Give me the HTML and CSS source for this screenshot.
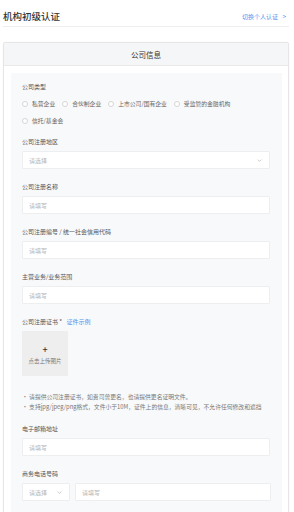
FILE: index.html
```html
<!DOCTYPE html>
<html lang="zh-CN">
<head>
    <meta charset="UTF-8">
    <meta name="viewport" content="width=device-width, initial-scale=1.0">
    <title>机构初级认证</title>
    <link rel="stylesheet" href="styles.css">
</head>
<body>
    <div class="page">
        <div class="topbar">
            <h1 class="title">机构初级认证</h1>
            <a class="switch-link" href="#">切换个人认证 <span class="arrow">&gt;</span></a>
        </div>

        <div class="card">
            <div class="card-head">公司信息</div>
            <div class="card-body">
                <div class="panel">
                    <div class="field field-radio">
                        <div class="label">公司类型</div>
                        <div class="radio-group">
                            <label class="radio"><span class="dot"></span>私营企业</label>
                            <label class="radio"><span class="dot"></span>合伙制企业</label>
                            <label class="radio"><span class="dot"></span>上市公司/国有企业</label>
                            <label class="radio"><span class="dot"></span>受监管的金融机构</label>
                            <label class="radio"><span class="dot"></span>信托/基金会</label>
                        </div>
                    </div>

                    <div class="field">
                        <div class="label">公司注册地区</div>
                        <div class="input select">
                            <span>请选择</span>
                            <svg class="chevron" viewBox="0 0 8 5" width="5" height="3"><path d="M1 1l3 3 3-3" fill="none" stroke="#aaa" stroke-width="1"/></svg>
                        </div>
                    </div>

                    <div class="field">
                        <div class="label">公司注册名称</div>
                        <div class="input">请填写</div>
                    </div>

                    <div class="field">
                        <div class="label">公司注册编号 / 统一社会信用代码</div>
                        <div class="input">请填写</div>
                    </div>

                    <div class="field">
                        <div class="label">主营业务/业务范围</div>
                        <div class="input">请填写</div>
                    </div>

                    <div class="field field-upload">
                        <div class="label">公司注册证书 * <a class="sample-link" href="#">证件示例</a></div>
                        <div class="upload">
                            <span class="plus">+</span>
                            <span class="upload-text">点击上传图片</span>
                        </div>
                    </div>

                    <ul class="notes">
                        <li>· 请提供公司注册证书，如贵司曾更名，也请提供更名证明文件。</li>
                        <li>· 支持jpg/jpeg/png格式，文件小于10M，证件上的信息，清晰可见，不允许任何修改和遮挡</li>
                    </ul>

                    <div class="field">
                        <div class="label">电子邮箱地址</div>
                        <div class="input">请填写</div>
                    </div>

                    <div class="field">
                        <div class="label">商务电话号码</div>
                        <div class="phone-row">
                            <div class="input select select-code">
                                <span>请选择</span>
                                <svg class="chevron" viewBox="0 0 8 5" width="5" height="3"><path d="M1 1l3 3 3-3" fill="none" stroke="#aaa" stroke-width="1"/></svg>
                            </div>
                            <div class="input phone-input">请填写</div>
                        </div>
                    </div>
                </div>
            </div>
        </div>
    </div>
</body>
</html>
```

FILE: styles.css
```css
* {
    margin: 0;
    padding: 0;
    box-sizing: border-box;
}

body {
    font-family: "Noto Sans CJK SC", "Noto Sans", sans-serif;
    background: #fff;
    color: #333;
}

.page {
    padding: 6px 5px 0 3px;
}

/* top title bar */
.topbar {
    height: 21px;
    display: flex;
    justify-content: space-between;
    align-items: center;
    border-bottom: 1px solid #eeeeee;
    padding-bottom: 1px;
}

.title {
    font-size: 9.5px;
    font-weight: 500;
    color: #333;
    line-height: 20px;
}

.switch-link {
    font-size: 6px;
    color: #4d94ef;
    text-decoration: none;
    margin-right: 3px;
}

.switch-link .arrow {
    margin-left: 3px;
    font-size: 6.5px;
}

/* card */
.card {
    margin-top: 15px;
    border: 1px solid #e6e6e6;
    border-radius: 2px;
    box-shadow: 0 0 2px rgba(0, 0, 0, 0.05);
}

.card-head {
    height: 23px;
    background: #f5f6f7;
    border-bottom: 1px solid #e9e9e9;
    display: flex;
    align-items: center;
    justify-content: center;
    font-size: 7.5px;
    color: #333;
}

.card-body {
    padding: 7px 6px 0 7px;
}

.panel {
    background: #f8f9fb;
    padding: 10px 12px 10px 11px;
}

/* fields */
.field {
    margin-bottom: 14px;
}

.label {
    font-size: 6px;
    line-height: 8px;
    color: #555;
    margin-bottom: 5px;
}

.sample-link {
    color: #4d94ef;
    text-decoration: none;
    margin-left: 3px;
}

.input {
    height: 18px;
    background: #fff;
    border: 1px solid #edeef0;
    border-radius: 1px;
    padding: 0 6px;
    font-size: 6px;
    color: #b5b5b5;
    display: flex;
    align-items: center;
}

.select {
    justify-content: space-between;
}

.chevron {
    margin-right: 1px;
}

/* radios */
.field-radio {
    margin-bottom: 9px;
}

.field-radio .label {
    margin-bottom: 4px;
}

.radio-group {
    display: flex;
    flex-wrap: wrap;
    column-gap: 7px;
}

.radio {
    display: flex;
    align-items: center;
    height: 17px;
    font-size: 5.8px;
    color: #666;
}

.dot {
    width: 6px;
    height: 6px;
    border: 1px solid #d6d6d6;
    border-radius: 50%;
    background: #fff;
    margin-right: 4px;
}

/* upload */
.field-upload {
    margin-bottom: 16px;
}

.upload {
    width: 46px;
    height: 45px;
    background: #eeeeee;
    display: flex;
    flex-direction: column;
    align-items: center;
    justify-content: center;
}

.plus {
    font-size: 9px;
    line-height: 9px;
    color: #333;
    font-weight: 500;
    margin-top: 2px;
}

.upload-text {
    font-size: 5.5px;
    color: #777;
    margin-top: 3px;
}

.notes {
    list-style: none;
    font-size: 5.8px;
    line-height: 10px;
    color: #777;
    margin-bottom: 13px;
    white-space: nowrap;
}

/* phone */
.phone-row {
    display: flex;
    gap: 5px;
}

.select-code {
    width: 48px;
    flex-shrink: 0;
}

.phone-input {
    flex: 1;
    margin-right: -1px;
}
```
